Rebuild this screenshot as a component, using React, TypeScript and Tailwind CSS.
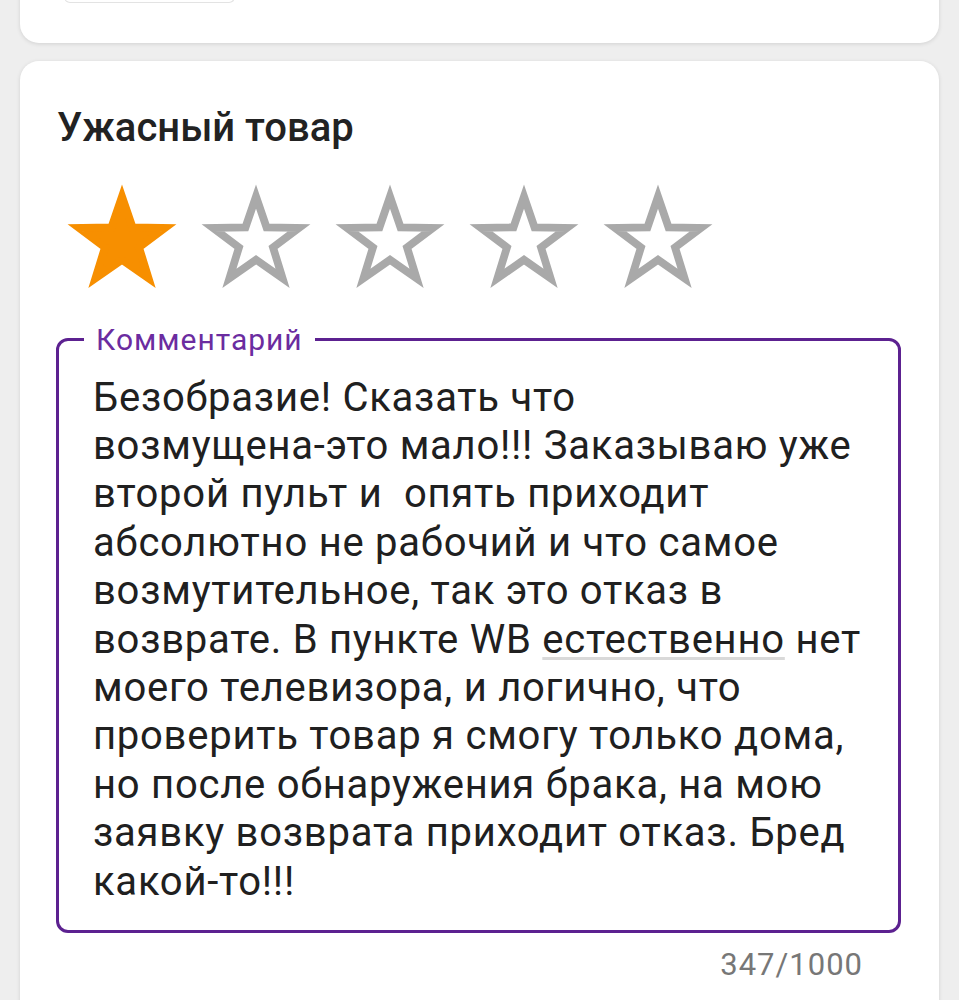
import { useState } from "react";

const lines = [
  "Безобразие! Сказать что",
  "возмущена-это мало!!! Заказываю уже",
  "второй пульт и\u00a0 опять приходит",
  "абсолютно не рабочий и что самое",
  "возмутительное, так это отказ в",
];

const tail = [
  "моего телевизора, и логично, что",
  "проверить товар я смогу только дома,",
  "но после обнаружения брака, на мою",
  "заявку возврата приходит отказ. Бред",
  "какой-то!!!",
];

const STAR =
  "M12 1 L14.7 8.88 L23.03 9.02 L16.37 14.02 L18.82 21.98 L12 17.2 L5.18 21.98 L7.63 14.02 L0.97 9.02 L9.3 8.88 Z";

function Star({ filled }: { filled: boolean }) {
  const color = filled ? "#f78f00" : "#a9a9a9";
  return (
    <svg viewBox="-2.11 -2.24 28.22 26.84" className="h-[104.6px] w-[110px] shrink-0">
      <path d={STAR} fill={filled ? color : "none"} stroke={color} strokeWidth={2} strokeLinejoin="miter" />
    </svg>
  );
}

export default function App() {
  const [rating] = useState(1);

  return (
    <div className="min-h-[1000px] overflow-hidden bg-[#eeeeee] font-['Roboto',sans-serif]">
      <div className="mx-5 -mt-5 h-[63px] rounded-b-[19px] bg-white shadow-[0_1px_4px_rgba(0,0,0,0.12)]">
        <div className="ml-[44px] h-[23px] w-[171px] rounded-b-md border border-t-0 border-[#e3e3e3]" />
      </div>

      <div className="mx-5 mt-[18px] rounded-[19px] bg-white pb-10 pl-[36px] pr-[38px] pt-[43px] shadow-[0_1px_4px_rgba(0,0,0,0.12)]">
        <h2 className="ml-[1px] text-[40px] font-medium leading-[48px] text-[#222]">Ужасный товар</h2>

        <div className="ml-[11px] mt-[32px] flex gap-[24px]">
          {[1, 2, 3, 4, 5].map((i) => (
            <Star key={i} filled={i <= rating} />
          ))}
        </div>

        <fieldset className="mt-[34px] rounded-[12px] border-[3px] border-[#5c2190] pb-[24px] pl-[34px] pr-[20px] pt-[17px]">
          <legend className="-ml-[9px] px-[12px] text-[30px] leading-[34px] tracking-[1px] text-[#6b2ca0]">
            Комментарий
          </legend>
          <div className="text-[40px] leading-[48.4px] tracking-[0.75px] text-[#202020]">
            {lines.map((l) => (
              <div key={l} className="whitespace-pre">
                {l}
              </div>
            ))}
            <div className="whitespace-pre">
              возврате. В пункте WB{" "}
              <span className="underline decoration-[#d9d9d9] decoration-[3px] underline-offset-[4px]">
                естественно
              </span>{" "}
              нет
            </div>
            {tail.map((l) => (
              <div key={l} className="whitespace-pre">
                {l}
              </div>
            ))}
          </div>
        </fieldset>

        <div className="mt-[14px] pr-[38px] text-right text-[31px] leading-[36px] tracking-[1px] text-[#777]">
          347/1000
        </div>
      </div>
    </div>
  );
}
